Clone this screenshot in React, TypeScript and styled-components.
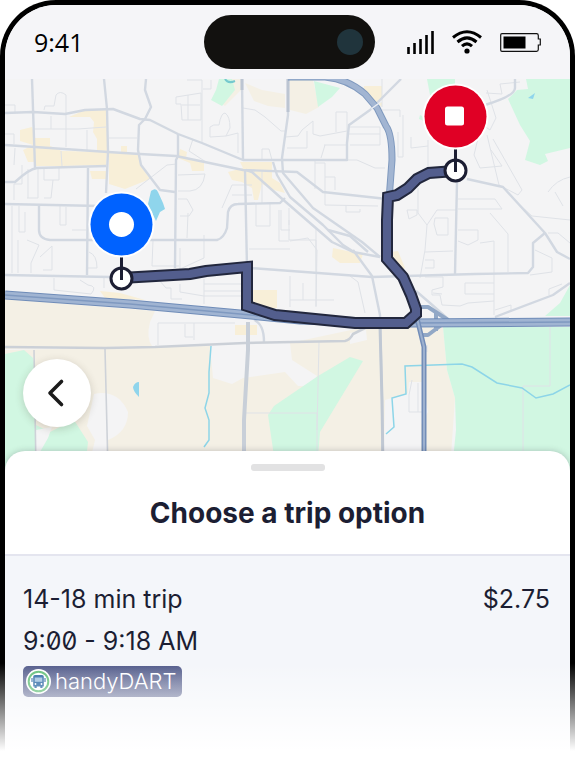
import React from "react";
import styled, { createGlobalStyle } from "styled-components";

const GlobalStyle = createGlobalStyle`
  *, *::before, *::after { box-sizing: border-box; }
  body {
    margin: 0;
    background: #fff;
    color: #1c1e33;
    font-family: Inter, "Liberation Sans", sans-serif;
  }
`;

const Phone = styled.div`
  position: relative;
  display: flex;
  flex-direction: column;
  min-height: 100vh;
  overflow: hidden;
  padding: 5px 5px 0;
  background: #000;
  border-radius: 56px 56px 0 0;

  &::after {
    content: "";
    position: absolute;
    inset: auto 0 0;
    height: 104px;
    background: linear-gradient(rgba(255, 255, 255, 0), #fff 88px);
    pointer-events: none;
  }
`;

const Screen = styled.main`
  flex: 1;
  display: flex;
  flex-direction: column;
  overflow: hidden;
  background: #f4f6fa;
  border-radius: 51px 51px 0 0;
`;

const StatusBar = styled.header`
  display: grid;
  grid-template-columns: 1fr auto 1fr;
  align-items: center;
  height: 74px;
  padding: 0 25px 0 29px;
  background: #f5f5f8;
`;

const Clock = styled.time`
  color: #000;
  font: 400 25px/32px "Open Sans", "Noto Sans", sans-serif;
`;

const Island = styled.div`
  display: flex;
  align-items: center;
  justify-content: flex-end;
  width: 171px;
  height: 54px;
  padding-right: 12px;
  background: #12110f;
  border-radius: 27px;
`;

const Camera = styled.span`
  width: 26px;
  height: 26px;
  border-radius: 50%;
  background: #20343c;
`;

const StatusIcons = styled.div`
  display: flex;
  align-items: center;
  justify-content: flex-end;
  gap: 18px;
  padding-right: 4px;
`;

const MapArea = styled.section`
  position: relative;
  background: #f4f4f5;
`;

const MapDrawing = styled.svg`
  display: block;
  width: 100%;
  height: auto;
`;

const BackButton = styled.button`
  position: absolute;
  left: 18px;
  bottom: 44px;
  display: grid;
  place-items: center;
  width: 68px;
  height: 68px;
  padding: 0;
  border: 0;
  border-radius: 50%;
  background: #fff;
  box-shadow: 0 2px 8px rgba(60, 50, 30, 0.2);
  cursor: pointer;
`;

const Sheet = styled.section`
  position: relative;
  flex: 1;
  display: flex;
  flex-direction: column;
  margin-top: -20px;
  overflow: hidden;
  background: #fff;
  border-radius: 20px 20px 0 0;
  box-shadow: 0 0 6px rgba(40, 40, 60, 0.25);
`;

const SheetHeader = styled.header`
  display: flex;
  flex-direction: column;
  align-items: center;
  gap: 26px;
  padding: 13px 16px 25px;
  border-bottom: 2px solid #e4e5ef;
`;

const Handle = styled.span`
  width: 74px;
  height: 7px;
  border-radius: 3px;
  background: #e2e2e3;
`;

const Title = styled.h1`
  margin: 0;
  font-size: 28px;
  font-weight: 700;
  line-height: 32px;
`;

const Trip = styled.article`
  flex: 1;
  display: flex;
  flex-direction: column;
  align-items: flex-start;
  padding: 22px 20px 70px 18px;
  background: #f4f6fa;
`;

const TripRow = styled.div`
  display: flex;
  justify-content: space-between;
  width: 100%;
  font-size: 25px;
  font-weight: 400;
  line-height: 42px;
  font-variant-numeric: slashed-zero;
`;

const Badge = styled.span`
  display: flex;
  align-items: center;
  gap: 4px;
  height: 31px;
  margin-top: 4px;
  padding: 0 5px 0 3px;
  border-radius: 5px;
  background: linear-gradient(#535c8b, #8188aa);
  color: #fff;
  font-size: 22px;
  font-weight: 300;
  line-height: 31px;
`;

const Signal = () => (
  <svg width="27" height="23" viewBox="0 0 27 23" aria-label="Signal">
    <path d="M1.5 23v-7M7.5 23V12M13.5 23V8M19.5 23V4M25.5 23V0" stroke="#000" strokeWidth="2.6" />
  </svg>
);

const Wifi = () => (
  <svg width="30" height="24" viewBox="0 0 30 24" aria-label="Wi-Fi">
    <g fill="none" stroke="#000" strokeWidth="3">
      <path d="M1 7.5Q15-4 29 7.5" />
      <path d="M5.5 12Q15 3.8 24.5 12" />
      <path d="M10 16.2Q15 11.5 20 16.2" />
    </g>
    <circle cx="15" cy="21" r="2.6" />
  </svg>
);

const Battery = () => (
  <svg width="41" height="19" viewBox="0 0 41 19" aria-label="Battery">
    <path d="M2 .7h34.5q1.8 0 1.8 1.8V6h2v6h-2v4.5q0 1.8-1.8 1.8H2Q.7 18.3.7 17V2Q.7.7 2 .7Z" fill="none" stroke="#111" strokeWidth="1.2" />
    <path d="M3.500 3.500h22v12h-22z" />
  </svg>
);

const BusLogo = () => (
  <svg width="25" height="25" viewBox="0 0 25 25" aria-hidden="true">
    <circle cx="12.5" cy="12.5" r="12.5" fill="#fff" />
    <circle cx="12.5" cy="12.5" r="9.8" fill="#fff" stroke="#62bf78" strokeWidth="2" />
    <path d="M9 6h7q1.800 0 1.800 1.800v9.700h-1.300V19h-2.200v-1.500h-3.600V19H8.500v-1.500H7.200V7.800Q7.200 6 9 6Z" fill="#2f6ba6" />
    <path d="M8.700 8.500h7.600v4.300H8.700z" fill="#9fc1e0" />
    <path d="M6 9v4M19 9v4" stroke="#2f6ba6" strokeWidth="1.200" />
    <circle cx="9.500" cy="15" r=".9" fill="#fff" />
    <circle cx="15.500" cy="15" r=".9" fill="#fff" />
  </svg>
);

const YELLOW = [
  "M69 117L85 110H106L108 151H97V139L93 132L94 122L90 117Z",
  "M20 130L32 127L35 138H50V146L62 151L107 152L106 165L60 166L36 166L34 162H28L23 150L33 145L20 141Z",
  "M109 153L121 152V146H127V152L139 154L140 165L150 179L125 189L109 184Z",
  "M90 171H106V179H92Z",
  "M180 149L187 152L186 158L204 163V171H192L190 163L178 158Z",
  "M228 172L243 168L240 162H272V178L280 183L285 193L274 190L262 184L258 200L254 200L252 188L242 182L232 180Z",
  "M364 86H382V107L372 98L363 91Z",
  "M333 248L352 252L363 254L360 263H340L332 257Z",
  "M390 252L398 251L405 268L400 272L390 262Z",
  "M252 290H277V308H262L250 300Z",
  "M235 325H257V335H235Z",
  "M100 291L120 293L145 300L105 298Z",
];

const GREEN = [
  "M5 354L24 350L33 358L36 370V425L50 432L74 420L88 442L85 470H5Z",
  "M443 327H570V470H452L456 430L455 398L447 370Z",
  "M570 285L560 303L545 316H570Z",
  "M526 79H570V148L545 154L548 161L540 165L525 160L530 141L520 125L508 99L517 90L528 89Z",
  "M427 79H455V94L430 95Z",
  "M314 81L340 88L332 97L318 107Z",
  "M219 79L216 90L211 100L222 106L235 90L232 79Z",
  "M420 115L426 118V122L419 119Z",
  "M268 415L274 406L318 376L350 357L363 361L320 432L317 470H276Z",
];

const WIDE_ROADS = [
  "M5 113L33 112L65 114L85 110L113 109L140 119L150 120L178 134L202 143L243 160H347V143L349 125L370 110L401 79",
  "M5 145L35 147L108 152L140 154L176 156L243 170L297 172L323 192L387 199",
  "M32 79L35 168",
  "M104 79L107 109L108 152L106 193",
  "M146 79L145 90L151 107L145 119L139 125L138 150L141 165L160 190L175 192",
  "M178 134V156L176 160L175 268",
  "M242 79L243 160",
  "M288 79V115L282 158L283 173L313 208L362 242L380 257",
  "M245 170L247 268",
  "M5 182H15Q29 169 37 168L106 166M88 168L87 275",
  "M5 204L100 206M39 206V230Q39 239 50 240H217Q224 238 227 228L228 212Q230 204 238 204L280 203L285 198",
  "M5 275L110 277",
  "M250 268L372 277L475 274L528 273L533 267V243L545 233",
  "M457 182L455 274",
  "M485 105Q515 96 515 88V79",
  "M467 179L503 187L545 233L557 252L570 259",
  "M246 170L252 172L280 197L332 242L353 252L380 257",
  "M273 162L277 175L290 197L323 225L343 245L354 252",
  "M328 230L350 236L368 252",
  "M353 250L372 276L380 315L382 400L383 470",
  "M254 320Q264 324 264 342",
  "M570 283L553 295L495 317",
  "M416 291L430 303L448 319",
];

const NARROW_ROADS = [
  "M44 110L45 106H54L56 95Q60 90 66 95V113M51 116V129M66 115V147M34 129L78 129L106 127M87 130V150M109 138H137M5 105H15V113M5 134H14V144",
  "M176 97L201 93V120H182L181 104H176ZM188 95V120M182 105H200M187 80H202V142M203 89H211V80M193 139L189 151L206 162",
  "M210 137V127Q213 124 219 125Q221 113 225 113Q230 116 230 128L226 136ZM226 136L238 133V153M243 108L255 110L265 117L281 131H286",
  "M178 175L205 174Q203 190 190 191H178M178 199H187L193 210L189 216H180M136 189L167 165L177 164",
  "M15 148L14 165M22 165V184H14V200M28 169V198M38 169V198H27M44 169V180H59V168M53 180L51 198H44M61 151L62 166",
  "M12 206V273M19 206V232H25V212M60 206V225H66V207M72 230H86M18 240V273M27 240L39 245L31 263V273M40 257L52 246V270H43M89 252Q97 255 97 268H88",
  "M153 240L152 266H179M180 248V269L204 258V235M188 213L187 238M222 208L232 185H252M232 195H252M256 204V226H270V204M262 172V203M262 160V149H269L272 160M279 210V241H289M289 208V225M249 249H290M281 210V230H290",
  "M159 280L166 288H171V299H182M180 284V292L204 296H245M204 279V304M204 284H245M204 291H245M54 278V290L91 294Q98 286 88 285L80 280M104 276V288",
  "M158 345V323H235M185 324V337H193M194 323V340M245 413H317V470M319 342L317 430",
  "M285 137L298 136L302 130L313 121V134L320 136L347 131M336 132V112H347V142M307 131V148H287M325 145L321 158M324 145H346M315 160V189M325 163V205L378 206M315 163H325M325 177H335V190M378 110H400V117M350 127H380V145H350M349 134H380M348 160H357L375 168H385M346 205V212H360V209",
  "M382 79V107M403 115V157H398V132M411 137V148L428 146M428 140V179M476 120L490 130L496 118L487 90M520 82L500 84L502 94L486 93M487 135L499 185L518 195L522 190L493 139M480 130L474 155L480 168L502 166L491 150",
  "M418 188L418 213L427 225L425 250L420 278M427 225L437 210H457M407 210H417V215L409 219ZM435 218H448V235H437L434 224ZM458 199H495L502 209H458M490 213L508 234V272M458 230H478V240L468 245L458 241M480 243L494 241V315M425 252L453 251M425 260H434V268H425",
  "M548 192Q556 180 570 177M563 206L555 192M520 205L532 216L570 220M548 233L558 233L570 243M535 250L552 258V272L530 275",
  "M289 220V240H316V306M316 228V274M290 300H334M290 276V307M303 283V300M316 307L317 250L308 238L290 241M350 276L358 282L365 313",
  "M425 277L443 277V287L432 290V295H440L442 305L460 306L468 303L494 301M465 283H494M465 283V294H494M433 293L442 294M495 310L511 305V312",
  "M550 327V386H523V470M412 380L409 395V412H422M418 383V412M427 345V352M549 295V289L562 284",
];

const HIGHWAY = "M5 295L130 304L240 314L300 320L410 323L570 322";
const NORTH_ARC = "M288 77H325Q348 79 365 94L377 108L386 126Q392 134 392 160L389 200";
const ROUTE = "M121 278L190 274L206 271L247 267V306L275 315L355 323H406L416 314V309L411 295L403 277L387 259V220L388 197L397 195L408 188L417 179L429 173L455 171";

const RoadMap = () => (
  <MapDrawing viewBox="5 79 565 392" role="img" aria-label="Trip route map">
    <rect x="5" y="79" width="565" height="392" fill="#f4f4f5" />
    <g fill="#f4f0e5">
      <path d="M5 299L155 311L150 322Q146 338 152 346L5 349Z" />
      <path d="M5 350L210 346L213 378L232 384L243 378L285 372L298 386H310L317 376L292 360L290 343L365 327L410 322L443 327L447 370L455 398L450 470H5Z" />
      <path d="M289 80H313L319 107L306 114L290 110Z" />
      <path d="M222 79H241V90L235 96L225 106L218 100Z" />
      <path d="M245 83L262 90L285 94V108L268 106L254 101Z" />
    </g>
    <g fill="#d1f7e2">{GREEN.map((d) => <path key={d} d={d} />)}</g>
    <g fill="#f4f4f5">
      <path d="M94 394Q118 389 128 412Q128 432 108 440L104 470H88L95 440L87 426Z" />
      <path d="M36 430L52 427L48 438L40 452L36 455Z" />
      <path d="M385 400L408 393L409 382H422L428 412L421 425V470H387L384 450Z" />
      <path d="M350 333L366 330L367 340L350 344Z" />
    </g>
    <g fill="#f8efd8">{YELLOW.map((d) => <path key={d} d={d} />)}</g>
    <g fill="#8fd5ec">
      <path d="M151 191Q156 187 158 192L163 203L165 209L160 212L156 221L148 204Z" />
      <path d="M139 382V397Q133 391 133 387Q135 382 139 382Z" />
      <path d="M528 98L535 93L533 99Z" />
    </g>
    <g fill="none" stroke="#dfe2e7" strokeWidth="1">{NARROW_ROADS.map((d) => <path key={d} d={d} />)}</g>
    <g fill="none" stroke="#d2d8e1" strokeWidth="2.4" strokeLinejoin="round">{WIDE_ROADS.map((d) => <path key={d} d={d} />)}</g>
    <path d="M5 347L105 348L155 347L245 343L345 341Q350 340 353 334L365 328" fill="none" stroke="#cbd0d7" strokeWidth="2.6" />
    <path d="M34 350L36 470M105 349L108 470" fill="none" stroke="#ced2d8" strokeWidth="1.6" />
    <g fill="none" stroke="#8dd5e8" strokeWidth="1.500">
      <path d="M211 346L209 372V393L205 408L209 420V440L204 447" />
      <path d="M386 434L394 427L392 398L406 394L405 366L462 364L472 367L497 383L522 388L536 398L553 394L570 385" />
    </g>
    <path d="M225 79Q228 84 235 81" fill="none" stroke="#75c9ce" strokeWidth="2" />
    <path d="M242 79V90M288 79V112" stroke="#bcc5d2" strokeWidth="3" />
    <g fill="none" strokeLinejoin="round">
      <path d={NORTH_ARC} stroke="#7f99be" strokeWidth="7" />
      <path d={NORTH_ARC} stroke="#a2b5d2" strokeWidth="5" />
      <path d="M371 109L382 101" stroke="#e9edf4" strokeWidth="1.500" />
      <path d="M418 307H428L448 320L428 335H419M436 311V331" stroke="#92a8c6" strokeWidth="4" />
      <path d={HIGHWAY} stroke="#6f8cb8" strokeWidth="9" />
      <path d={HIGHWAY} stroke="#a0b4d2" strokeWidth="7" />
      <path d={HIGHWAY} stroke="#7f99c0" strokeWidth="1.500" />
      <path d="M416 314L424 347V470" stroke="#728db8" strokeWidth="5" />
      <path d="M416 314L424 347V470" stroke="#9db1cf" strokeWidth="2" />
      <path d="M248 322V350L244 420V470" stroke="#c8cfd8" strokeWidth="4" />
      <path d="M380 326L382 400L383 470" stroke="#c0c8d3" strokeWidth="3" />
    </g>
    <g fill="none" strokeLinejoin="miter">
      <path d={ROUTE} stroke="#22273d" strokeWidth="12" />
      <path d={ROUTE} stroke="#535e8d" strokeWidth="8" />
    </g>
    <g stroke="#1c1e33" strokeWidth="3">
      <circle cx="121.500" cy="278.500" r="10.500" fill="#fff" />
      <circle cx="455.500" cy="170.500" r="10.500" fill="#fff" />
      <path d="M121.500 250V280M455.500 140V172" />
    </g>
    <circle cx="121.500" cy="224.500" r="33" fill="#fff" />
    <circle cx="121.500" cy="224.500" r="31" fill="#0062ff" />
    <circle cx="121.500" cy="224.500" r="12.500" fill="#fff" />
    <circle cx="455.500" cy="116.500" r="33" fill="#fff" />
    <circle cx="455.500" cy="116.500" r="31" fill="#e00025" />
    <rect x="445" y="106.500" width="19" height="19" rx="2.500" fill="#fff" />
  </MapDrawing>
);

export default function App() {
  return (
    <>
      <GlobalStyle />
      <Phone>
        <Screen>
          <StatusBar>
            <Clock>9:41</Clock>
            <Island><Camera /></Island>
            <StatusIcons>
              <Signal />
              <Wifi />
              <Battery />
            </StatusIcons>
          </StatusBar>
          <MapArea>
            <RoadMap />
            <BackButton type="button" aria-label="Back">
              <svg width="20" height="30" viewBox="0 0 20 30" aria-hidden="true">
                <path d="M14.500 3.500L3 15L14.500 26.500" fill="none" stroke="#1b1b1b" strokeWidth="3.600" strokeLinecap="round" strokeLinejoin="round" />
              </svg>
            </BackButton>
          </MapArea>
          <Sheet>
            <SheetHeader>
              <Handle />
              <Title>Choose a trip option</Title>
            </SheetHeader>
            <Trip>
              <TripRow>
                <span>14-18 min trip</span>
                <span>$2.75</span>
              </TripRow>
              <TripRow>9:00 - 9:18 AM</TripRow>
              <Badge><BusLogo />handyDART</Badge>
            </Trip>
          </Sheet>
        </Screen>
      </Phone>
    </>
  );
}
